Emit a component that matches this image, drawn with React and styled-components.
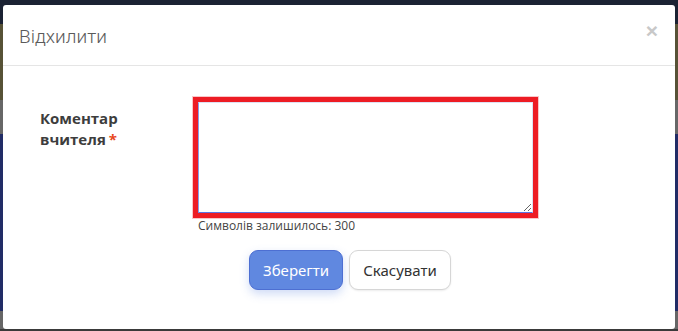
import React from "react";
import styled, { createGlobalStyle } from "styled-components";

const Global = createGlobalStyle`
  html, body { margin: 0; padding: 0; }
  body {
    width: 678px;
    height: 331px;
    overflow: hidden;
    font-family: "Open Sans", "Noto Sans", sans-serif;
  }
`;

const Backdrop = styled.div`
  box-sizing: border-box;
  width: 678px;
  height: 331px;
  padding: 5px 3px 2px 3px;
  background: linear-gradient(
    to bottom,
    #1b2233 0px,
    #1b2233 24px,
    #575236 24px,
    #575236 100px,
    #676767 100px,
    #676767 134px,
    #212c66 134px,
    #212c66 311px,
    #666666 311px,
    #666666 329px,
    #3a3a3a 329px
  );
`;

const Modal = styled.div`
  height: 324px;
  background: #ffffff;
  border-radius: 3px;
  display: flex;
  flex-direction: column;
`;

const Header = styled.div`
  height: 61px;
  box-sizing: border-box;
  border-bottom: 1px solid #e5e5e5;
  display: flex;
  align-items: flex-start;
  justify-content: space-between;
  padding: 0 17px 0 16px;
`;

const Title = styled.h4`
  margin: 0;
  padding-top: 20px;
  font-family: Roboto, "Noto Sans", sans-serif;
  font-weight: 300;
  font-size: 19px;
  line-height: 24px;
  color: #5a5a5a;
`;

const Close = styled.button`
  border: 0;
  background: transparent;
  padding: 0;
  margin-top: 15px;
  font-family: "Liberation Sans", Arial, sans-serif;
  font-size: 21px;
  font-weight: bold;
  line-height: 21px;
  color: #c8c8c8;
  cursor: pointer;
`;

const Body = styled.div`
  padding: 31px 0 0 37px;
`;

const FormRow = styled.div`
  display: grid;
  grid-template-columns: 153px 345px;
`;

const Label = styled.label`
  padding-top: 11px;
  font-weight: 700;
  font-size: 15px;
  line-height: 21px;
  color: #3d3d3d;
`;

const Star = styled.span`
  color: #e8481c;
  margin-left: 3px;
`;

const Field = styled.div`
  display: flex;
  flex-direction: column;
`;

const Highlight = styled.div`
  border: 5px solid #ed1c24;
  box-shadow: 0 0 0 1px rgba(237, 28, 36, 0.25);
  display: flex;
`;

const TextArea = styled.textarea`
  box-sizing: border-box;
  width: 335px;
  height: 111px;
  margin: 0;
  padding: 4px 6px;
  border: 1px solid #dde0f2;
  border-left-color: #8a9be6;
  border-bottom-color: #5d74e2;
  outline: none;
  font-family: "Open Sans", sans-serif;
  font-size: 13px;
  resize: both;
`;

const Counter = styled.div`
  margin: 0 0 0 5px;
  font-size: 12px;
  line-height: 16px;
  color: #444444;
`;

const Actions = styled.div`
  display: flex;
  gap: 6px;
  margin: 16px 0 0 209px;
`;

const Button = styled.button`
  box-sizing: border-box;
  height: 40px;
  padding: 0 13px;
  border-radius: 9px;
  font-family: "Noto Sans", "Open Sans", sans-serif;
  font-size: 15px;
  line-height: 20px;
  cursor: pointer;
  border: 1px solid ${(p) => (p.$primary ? "#4d6fd2" : "#d6d6d6")};
  background: ${(p) => (p.$primary ? "#6088e0" : "#ffffff")};
  color: ${(p) => (p.$primary ? "#ffffff" : "#333333")};
  box-shadow: ${(p) =>
    p.$primary ? "0 4px 10px rgba(96, 136, 224, 0.3)" : "0 1px 2px rgba(0,0,0,0.08)"};
`;

export default function App() {
  return (
    <>
      <Global />
      <Backdrop>
        <Modal>
          <Header>
            <Title>Відхилити</Title>
            <Close aria-label="Close">×</Close>
          </Header>
          <Body>
            <FormRow>
              <Label>
                Коментар вчителя<Star>*</Star>
              </Label>
              <Field>
                <Highlight>
                  <TextArea />
                </Highlight>
                <Counter>Символів залишилось: 300</Counter>
              </Field>
            </FormRow>
            <Actions>
              <Button $primary>Зберегти</Button>
              <Button>Скасувати</Button>
            </Actions>
          </Body>
        </Modal>
      </Backdrop>
    </>
  );
}
